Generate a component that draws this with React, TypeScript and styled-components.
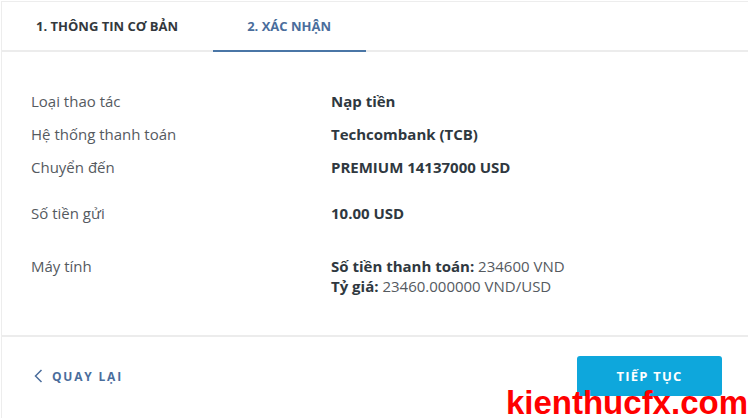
import styled, { createGlobalStyle } from "styled-components"

const GlobalStyle = createGlobalStyle`
  html, body {
    margin: 0;
    padding: 0;
    background: #ffffff;
    font-family: "Open Sans", "Noto Sans", sans-serif;
  }
  body {
    width: 748px;
    height: 418px;
    overflow: hidden;
  }
`

const Page = styled.div`
  position: relative;
  width: 748px;
  height: 418px;
  overflow: hidden;
  padding: 1px 0 0 1px;
  box-sizing: border-box;
`

const Panel = styled.div`
  border-top: 1px solid #ededed;
  border-left: 1px solid #ededed;
  height: 100%;
  box-sizing: border-box;
`

const Tabs = styled.div`
  display: flex;
  height: 50px;
  border-bottom: 2px solid #ececec;
  box-sizing: border-box;
`

const Tab = styled.div<{ $active?: boolean }>`
  display: flex;
  align-items: center;
  padding: 0 35px 0 34px;
  height: 50px;
  margin-bottom: -2px;
  box-sizing: border-box;
  font-size: 13px;
  font-weight: 700;
  color: ${p => (p.$active ? "#4a6d9c" : "#33383d")};
  border-bottom: 2px solid ${p => (p.$active ? "#4a76a6" : "transparent")};
`

const Details = styled.div`
  padding: 39px 0 39px 29px;
  border-bottom: 2px solid #ececec;
`

const Row = styled.div<{ $gap: number }>`
  display: grid;
  grid-template-columns: 300px 1fr;
  margin-top: ${p => p.$gap}px;
  font-size: 15px;
  line-height: 20px;
`

const Label = styled.div`
  color: #555a5f;
`

const Value = styled.div`
  color: #2f3840;
  font-weight: 700;
`

const Line = styled.div`
  color: #555a5f;
  font-weight: 400;
  b {
    color: #2f3840;
    font-weight: 700;
  }
`

const Footer = styled.div`
  display: flex;
  align-items: flex-start;
  justify-content: space-between;
  padding: 19px 26px 0 32px;
`

const BackLink = styled.div`
  display: flex;
  align-items: center;
  gap: 9px;
  height: 40px;
  color: #4a6d9c;
  font-size: 12px;
  font-weight: 700;
  letter-spacing: 1.8px;
`

const NextButton = styled.button`
  width: 145px;
  height: 40px;
  border: none;
  border-radius: 3px;
  background: #0ea7dc;
  color: #ffffff;
  font-family: "Open Sans", "Noto Sans", sans-serif;
  font-size: 13px;
  font-weight: 700;
  letter-spacing: 1.2px;
`

const Watermark = styled.div`
  position: absolute;
  right: 0;
  bottom: 0;
  font-family: "Liberation Sans", Arial, sans-serif;
  font-size: 33px;
  font-weight: 700;
  color: #ff0000;
  line-height: 31px;
`

export default function App() {
  return (
    <Page>
      <GlobalStyle />
      <Panel>
        <Tabs>
          <Tab>1. THÔNG TIN CƠ BẢN</Tab>
          <Tab $active>2. XÁC NHẬN</Tab>
        </Tabs>
        <Details>
          <Row $gap={0}>
            <Label>Loại thao tác</Label>
            <Value>Nạp tiền</Value>
          </Row>
          <Row $gap={13}>
            <Label>Hệ thống thanh toán</Label>
            <Value>Techcombank (TCB)</Value>
          </Row>
          <Row $gap={13}>
            <Label>Chuyển đến</Label>
            <Value>PREMIUM 14137000 USD</Value>
          </Row>
          <Row $gap={26}>
            <Label>Số tiền gửi</Label>
            <Value>10.00 USD</Value>
          </Row>
          <Row $gap={33}>
            <Label>Máy tính</Label>
            <div>
              <Line><b>Số tiền thanh toán:</b> 234600 VND</Line>
              <Line><b>Tỷ giá:</b> 23460.000000 VND/USD</Line>
            </div>
          </Row>
        </Details>
        <Footer>
          <BackLink>
            <svg width="9" height="14" viewBox="0 0 9 14">
              <polyline points="7.5,1 1.5,7 7.5,13" fill="none" stroke="#4a6d9c" strokeWidth="1.5" />
            </svg>
            QUAY LẠI
          </BackLink>
          <NextButton>TIẾP TỤC</NextButton>
        </Footer>
      </Panel>
      <Watermark>kienthucfx.com</Watermark>
    </Page>
  )
}
